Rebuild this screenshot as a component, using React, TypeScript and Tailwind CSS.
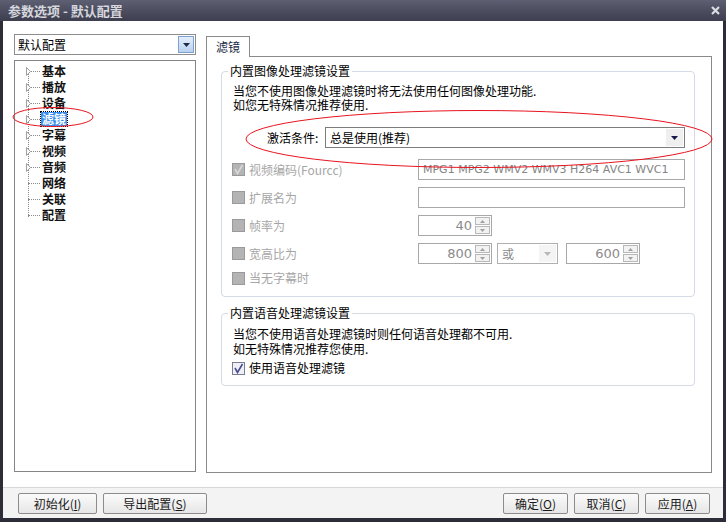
import React from "react";

const FONT = { fontFamily: '"Noto Sans CJK SC", "Noto Sans", sans-serif' };
const LATIN = { fontFamily: '"DejaVu Sans", "Noto Sans CJK SC", sans-serif' };

const treeItems = [
  { label: "基本", arrow: true },
  { label: "播放", arrow: true },
  { label: "设备", arrow: true },
  { label: "滤镜", arrow: true, selected: true },
  { label: "字幕", arrow: true },
  { label: "视频", arrow: true },
  { label: "音频", arrow: true },
  { label: "网络", arrow: false },
  { label: "关联", arrow: false },
  { label: "配置", arrow: false },
];

function Check({ checked, disabled }: { checked?: boolean; disabled?: boolean }) {
  return (
    <div
      className={`w-[13px] h-[13px] shrink-0 border flex items-center justify-center ${
        disabled ? "bg-[#b4b4b4] border-[#9a9a9a]" : "bg-[#eef0f6] border-[#7b7d95]"
      }`}
    >
      {checked && (
        <svg width="11" height="11" viewBox="0 0 11 11">
          <path
            d="M2 5 L4.5 9.5 L9.5 1"
            fill="none"
            stroke={disabled ? "#d8d8d8" : "#4a4d92"}
            strokeWidth="1.6"
          />
        </svg>
      )}
    </div>
  );
}

function Spin({ value, width }: { value: string; width: string }) {
  return (
    <div className={`h-[21px] ${width} border border-[#a8a8a8] bg-white flex items-center justify-end pr-[1px]`}>
      <span className="text-[13px] text-[#8a8a8a] mr-[3px]" style={LATIN}>
        {value}
      </span>
      <div className="flex flex-col gap-[1px]">
        <div className="w-[15px] h-[8px] border border-[#b8b8b8] bg-[#f2f2f2] flex items-center justify-center">
          <svg width="5" height="3" viewBox="0 0 5 3">
            <path d="M0 3 L2.5 0 L5 3 Z" fill="#a0a0a0" />
          </svg>
        </div>
        <div className="w-[15px] h-[8px] border border-[#b8b8b8] bg-[#f2f2f2] flex items-center justify-center">
          <svg width="5" height="3" viewBox="0 0 5 3">
            <path d="M0 0 L2.5 3 L5 0 Z" fill="#a0a0a0" />
          </svg>
        </div>
      </div>
    </div>
  );
}

function Row({ label, checked, children, h = "h-[21px]" }: { label: string; checked?: boolean; children?: React.ReactNode; h?: string }) {
  return (
    <div className={`flex items-center ${h}`}>
      <div className="w-[186px] flex items-center gap-[4px]">
        <Check checked={checked} disabled />
        <span className="text-[12px] text-[#a6a6a6] leading-none">{label}</span>
      </div>
      {children}
    </div>
  );
}

function Button({ children, w }: { children: React.ReactNode; w: string }) {
  return (
    <div
      className={`${w} h-[21px] border border-[#8c8c8c] rounded-[2px] bg-gradient-to-b from-[#fbfbfb] to-[#e6e6e6] flex items-center justify-center text-[12px] text-[#1a1a1a]`}
    >
      {children}
    </div>
  );
}

export default function App() {
  return (
    <div className="relative w-[726px] h-[522px] bg-[#2c2d38] flex flex-col overflow-hidden" style={FONT}>
      {/* title bar */}
      <div className="h-[21px] shrink-0 bg-gradient-to-b from-[#5d5f72] to-[#3d3e4e] flex items-center justify-between pl-[8px] pr-[6px]">
        <span className="text-[13px] font-bold text-[#d6d7de] leading-none">参数选项 - 默认配置</span>
        <svg width="9" height="9" viewBox="0 0 9 9">
          <path d="M1 1 L8 8 M8 1 L1 8" stroke="#dcdde4" strokeWidth="2.2" />
        </svg>
      </div>

      <div className="flex-1 mx-[3px] mb-[4px] bg-white flex flex-col">
        {/* main area */}
        <div className="h-[466px] flex pt-[13px] pl-[11px] gap-[10px]">
          {/* left column */}
          <div className="w-[182px] flex flex-col gap-[5px]">
            <div className="h-[21px] border border-[#8d8d8d] bg-white flex items-center justify-between pl-[3px] pr-[1px]">
              <span className="text-[12px] text-black leading-none">默认配置</span>
              <div className="w-[16px] h-[17px] border border-[#7ea1cf] bg-gradient-to-b from-[#e4eefb] to-[#b9d1ef] flex items-center justify-center">
                <svg width="7" height="4" viewBox="0 0 7 4">
                  <path d="M0 0 L3.5 4 L7 0 Z" fill="#1e2a44" />
                </svg>
              </div>
            </div>
            <div className="h-[412px] border border-[#858585] bg-white relative pt-[2px]">
              <div className="absolute left-[13px] top-[12px] h-[144px] border-l border-dotted border-[#8a8a8a]" />
              {treeItems.map((it) => (
                <div key={it.label} className="h-[16px] flex items-center relative">
                  <div className="w-[11px]" />
                  <div className="w-[5px] flex items-center">
                    {it.arrow && (
                      <svg width="5" height="9" viewBox="0 0 5 9">
                        <path d="M0.5 0.5 L4.5 4.5 L0.5 8.5 Z" fill="white" stroke="#a0a0a0" strokeWidth="1" />
                      </svg>
                    )}
                  </div>
                  <div className={`w-[9px] border-t border-dotted border-[#8a8a8a] ${it.arrow ? "" : "ml-[-3px] w-[12px]"}`} />
                  <span
                    className={`ml-[1px] px-[1px] text-[12px] leading-[14px] font-bold ${
                      it.selected ? "bg-[#3a8ef0] text-white outline outline-1 outline-dotted outline-black" : "text-[#111]"
                    }`}
                  >
                    {it.label}
                  </span>
                </div>
              ))}
            </div>
          </div>

          {/* right panel */}
          <div className="w-[506px] flex flex-col pt-[1px]">
            <div className="flex">
              <div className="w-[44px] h-[21px] border border-b-0 border-[#8a8a8a] bg-white flex items-center justify-center text-[12px] text-[#1b2b45] relative top-[1px]">
                滤镜
              </div>
            </div>
            <div className="h-[417px] border border-[#8a8a8a] bg-white pl-[14px] pt-[14px] flex flex-col">
              {/* group 1 */}
              <div className="relative w-[474px] h-[226px] border border-[#d3dce4] rounded-[4px] pl-[10px] pr-[9px] pt-[12px]">
                <span className="absolute left-[6px] top-[-9px] bg-white px-[2px] text-[12px] leading-[16px] text-black">
                  内置图像处理滤镜设置
                </span>
                <div className="text-[12px] leading-[14px] text-black pl-[1px]">
                  <div>当您不使用图像处理滤镜时将无法使用任何图像处理功能.</div>
                  <div>如您无特殊情况推荐使用.</div>
                </div>
                <div className="flex items-center mt-[15px] pl-[35px]">
                  <span className="w-[58px] text-[12px] text-black">激活条件:</span>
                  <div className="flex-1 h-[21px] border border-[#7d7d7d] bg-white flex items-center justify-between pl-[4px] pr-[1px]">
                    <span className="text-[12px] text-black leading-none">总是使用(推荐)</span>
                    <div className="w-[17px] h-[17px] bg-[#efefef] flex items-center justify-center">
                      <svg width="7" height="4" viewBox="0 0 7 4">
                        <path d="M0 0 L3.5 4 L7 0 Z" fill="#14184a" />
                      </svg>
                    </div>
                  </div>
                </div>
                <div className="flex flex-col mt-[11px] gap-[7px]">
                  <Row label="视频编码(Fourcc)" checked>
                    <div className="flex-1 h-[21px] border border-[#a8a8a8] bg-white flex items-center pl-[4px] overflow-hidden">
                      <span className="text-[11px] text-[#858585] leading-none whitespace-nowrap" style={LATIN}>
                        MPG1 MPG2 WMV2 WMV3 H264 AVC1 WVC1
                      </span>
                    </div>
                  </Row>
                  <Row label="扩展名为">
                    <div className="flex-1 h-[21px] border border-[#a8a8a8] bg-white" />
                  </Row>
                  <Row label="帧率为">
                    <Spin value="40" width="w-[74px]" />
                  </Row>
                  <Row label="宽高比为">
                    <Spin value="800" width="w-[74px]" />
                    <div className="ml-[5px] w-[61px] h-[21px] border border-[#b0b0b0] bg-white flex items-center justify-between pl-[4px] pr-[1px]">
                      <span className="text-[12px] text-[#8a8a8a] leading-none">或</span>
                      <div className="w-[17px] h-[17px] bg-[#f4f4f4] flex items-center justify-center">
                        <svg width="7" height="4" viewBox="0 0 7 4">
                          <path d="M0 0 L3.5 4 L7 0 Z" fill="#b8b8b8" />
                        </svg>
                      </div>
                    </div>
                    <div className="ml-[8px]">
                      <Spin value="600" width="w-[74px]" />
                    </div>
                  </Row>
                  <Row label="当无字幕时" h="h-[14px]" />
                </div>
              </div>

              {/* group 2 */}
              <div className="relative mt-[16px] w-[474px] h-[73px] border border-[#d3dce4] rounded-[4px] pl-[10px] pt-[12px]">
                <span className="absolute left-[6px] top-[-9px] bg-white px-[2px] text-[12px] leading-[16px] text-black">
                  内置语音处理滤镜设置
                </span>
                <div className="text-[12px] leading-[15px] text-black pl-[1px]">
                  <div>当您不使用语音处理滤镜时则任何语音处理都不可用.</div>
                  <div>如无特殊情况推荐您使用.</div>
                </div>
                <div className="flex items-center gap-[4px] mt-[5px] h-[14px]">
                  <Check checked />
                  <span className="text-[12px] text-black leading-none">使用语音处理滤镜</span>
                </div>
              </div>
            </div>
          </div>
        </div>

        {/* footer */}
        <div className="flex-1 border-t border-[#d8d8d8] bg-[#f3f3f3] flex items-start pt-[5px] pl-[15px] pr-[13px]">
          <div className="flex gap-[6px]">
            <Button w="w-[79px]">
              初始化(<span className="underline">I</span>)
            </Button>
            <Button w="w-[104px]">
              导出配置(<span className="underline">S</span>)
            </Button>
          </div>
          <div className="flex-1" />
          <div className="flex gap-[6px]">
            <Button w="w-[65px]">
              确定(<span className="underline">O</span>)
            </Button>
            <Button w="w-[65px]">
              取消(<span className="underline">C</span>)
            </Button>
            <Button w="w-[65px]">
              应用(<span className="underline">A</span>)
            </Button>
          </div>
        </div>
      </div>

      {/* red annotation ellipses */}
      <svg className="absolute inset-0 pointer-events-none" width="726" height="522">
        <ellipse cx="53" cy="117" rx="40" ry="9.5" fill="none" stroke="#e8141e" strokeWidth="1" />
        <ellipse cx="479" cy="139" rx="233" ry="28.5" fill="none" stroke="#e8141e" strokeWidth="1" />
      </svg>
    </div>
  );
}
